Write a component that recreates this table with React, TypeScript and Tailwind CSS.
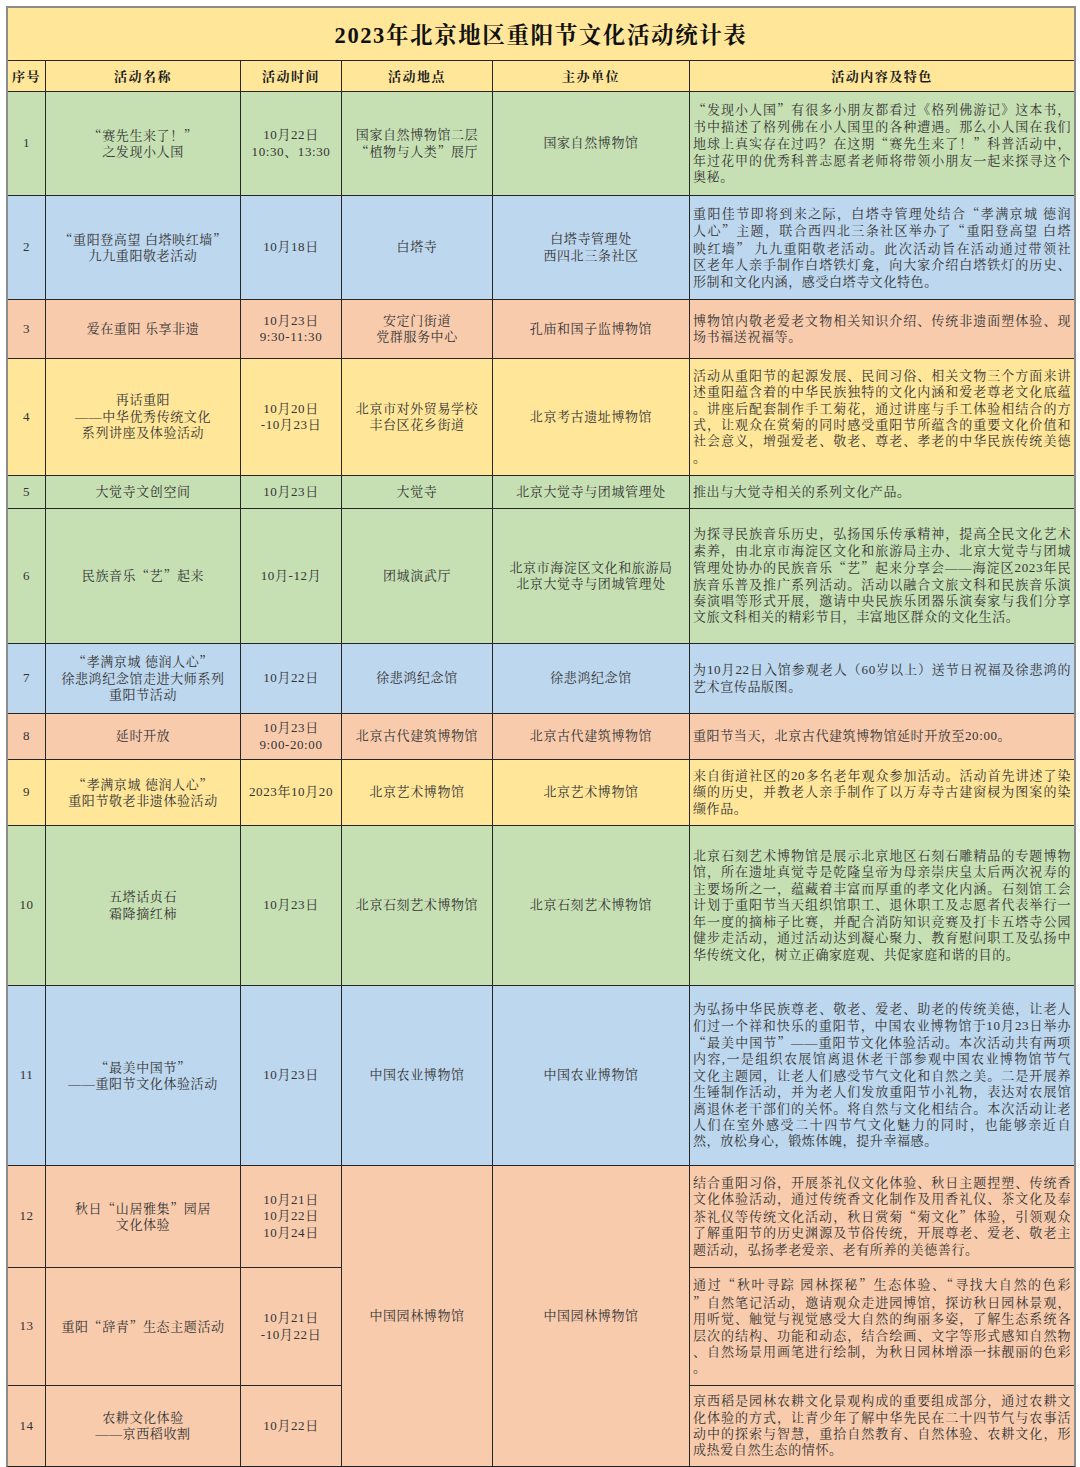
import React from "react";

type Row = {
  no: string;
  name: string[];
  time: string[];
  place?: string[];
  org?: string[];
  content: string[];
  bg: string;
};

const GREEN = "bg-[#c6e0b4]";
const BLUE = "bg-[#bdd7ee]";
const ORANGE = "bg-[#f8cbad]";
const YELLOW = "bg-[#ffe699]";

const rows: Row[] = [
  {
    no: "1",
    name: ["“赛先生来了！”", "之发现小人国"],
    time: ["10月22日", "10:30、13:30"],
    place: ["国家自然博物馆二层", "“植物与人类”展厅"],
    org: ["国家自然博物馆"],
    content: [
      "“发现小人国”有很多小朋友都看过《格列佛游记》这本书，",
      "书中描述了格列佛在小人国里的各种遭遇。那么小人国在我们",
      "地球上真实存在过吗？在这期“赛先生来了！”科普活动中，",
      "年过花甲的优秀科普志愿者老师将带领小朋友一起来探寻这个",
      "奥秘。",
    ],
    bg: GREEN,
  },
  {
    no: "2",
    name: ["“重阳登高望 白塔映红墙”", "九九重阳敬老活动"],
    time: ["10月18日"],
    place: ["白塔寺"],
    org: ["白塔寺管理处", "西四北三条社区"],
    content: [
      "重阳佳节即将到来之际，白塔寺管理处结合“孝满京城 德润",
      "人心”主题，联合西四北三条社区举办了“重阳登高望 白塔",
      "映红墙” 九九重阳敬老活动。此次活动旨在活动通过带领社",
      "区老年人亲手制作白塔铁灯龛，向大家介绍白塔铁灯的历史、",
      "形制和文化内涵，感受白塔寺文化特色。",
    ],
    bg: BLUE,
  },
  {
    no: "3",
    name: ["爱在重阳 乐享非遗"],
    time: ["10月23日", "9:30-11:30"],
    place: ["安定门街道", "党群服务中心"],
    org: ["孔庙和国子监博物馆"],
    content: [
      "博物馆内敬老爱老文物相关知识介绍、传统非遗面塑体验、现",
      "场书福送祝福等。",
    ],
    bg: ORANGE,
  },
  {
    no: "4",
    name: ["再话重阳", "——中华优秀传统文化", "系列讲座及体验活动"],
    time: ["10月20日", "-10月23日"],
    place: ["北京市对外贸易学校", "丰台区花乡街道"],
    org: ["北京考古遗址博物馆"],
    content: [
      "活动从重阳节的起源发展、民间习俗、相关文物三个方面来讲",
      "述重阳蕴含着的中华民族独特的文化内涵和爱老尊老文化底蕴",
      "。讲座后配套制作手工菊花，通过讲座与手工体验相结合的方",
      "式，让观众在赏菊的同时感受重阳节所蕴含的重要文化价值和",
      "社会意义，增强爱老、敬老、尊老、孝老的中华民族传统美德",
      "。",
    ],
    bg: YELLOW,
  },
  {
    no: "5",
    name: ["大觉寺文创空间"],
    time: ["10月23日"],
    place: ["大觉寺"],
    org: ["北京大觉寺与团城管理处"],
    content: ["推出与大觉寺相关的系列文化产品。"],
    bg: GREEN,
  },
  {
    no: "6",
    name: ["民族音乐“艺”起来"],
    time: ["10月-12月"],
    place: ["团城演武厅"],
    org: ["北京市海淀区文化和旅游局", "北京大觉寺与团城管理处"],
    content: [
      "为探寻民族音乐历史，弘扬国乐传承精神，提高全民文化艺术",
      "素养，由北京市海淀区文化和旅游局主办、北京大觉寺与团城",
      "管理处协办的民族音乐“艺”起来分享会——海淀区2023年民",
      "族音乐普及推广系列活动。活动以融合文旅文科和民族音乐演",
      "奏演唱等形式开展，邀请中央民族乐团器乐演奏家与我们分享",
      "文旅文科相关的精彩节目，丰富地区群众的文化生活。",
    ],
    bg: GREEN,
  },
  {
    no: "7",
    name: ["“孝满京城 德润人心”", "徐悲鸿纪念馆走进大师系列", "重阳节活动"],
    time: ["10月22日"],
    place: ["徐悲鸿纪念馆"],
    org: ["徐悲鸿纪念馆"],
    content: [
      "为10月22日入馆参观老人（60岁以上）送节日祝福及徐悲鸿的",
      "艺术宣传品版图。",
    ],
    bg: BLUE,
  },
  {
    no: "8",
    name: ["延时开放"],
    time: ["10月23日", "9:00-20:00"],
    place: ["北京古代建筑博物馆"],
    org: ["北京古代建筑博物馆"],
    content: ["重阳节当天，北京古代建筑博物馆延时开放至20:00。"],
    bg: ORANGE,
  },
  {
    no: "9",
    name: ["“孝满京城 德润人心”", "重阳节敬老非遗体验活动"],
    time: ["2023年10月20"],
    place: ["北京艺术博物馆"],
    org: ["北京艺术博物馆"],
    content: [
      "来自街道社区的20多名老年观众参加活动。活动首先讲述了染",
      "缬的历史，并教老人亲手制作了以万寿寺古建窗棂为图案的染",
      "缬作品。",
    ],
    bg: YELLOW,
  },
  {
    no: "10",
    name: ["五塔话贞石", "霜降摘红柿"],
    time: ["10月23日"],
    place: ["北京石刻艺术博物馆"],
    org: ["北京石刻艺术博物馆"],
    content: [
      "北京石刻艺术博物馆是展示北京地区石刻石雕精品的专题博物",
      "馆，所在遗址真觉寺是乾隆皇帝为母亲崇庆皇太后两次祝寿的",
      "主要场所之一，蕴藏着丰富而厚重的孝文化内涵。石刻馆工会",
      "计划于重阳节当天组织馆职工、退休职工及志愿者代表举行一",
      "年一度的摘柿子比赛，并配合消防知识竞赛及打卡五塔寺公园",
      "健步走活动，通过活动达到凝心聚力、教育慰问职工及弘扬中",
      "华传统文化，树立正确家庭观、共促家庭和谐的目的。",
    ],
    bg: GREEN,
  },
  {
    no: "11",
    name: ["“最美中国节”", "——重阳节文化体验活动"],
    time: ["10月23日"],
    place: ["中国农业博物馆"],
    org: ["中国农业博物馆"],
    content: [
      "为弘扬中华民族尊老、敬老、爱老、助老的传统美德，让老人",
      "们过一个祥和快乐的重阳节，中国农业博物馆于10月23日举办",
      "“最美中国节”——重阳节文化体验活动。本次活动共有两项",
      "内容,一是组织农展馆离退休老干部参观中国农业博物馆节气",
      "文化主题园，让老人们感受节气文化和自然之美。二是开展养",
      "生锤制作活动，并为老人们发放重阳节小礼物，表达对农展馆",
      "离退休老干部们的关怀。将自然与文化相结合。本次活动让老",
      "人们在室外感受二十四节气文化魅力的同时，也能够亲近自",
      "然，放松身心，锻炼体魄，提升幸福感。",
    ],
    bg: BLUE,
  },
  {
    no: "12",
    name: ["秋日“山居雅集”园居", "文化体验"],
    time: ["10月21日", "10月22日", "10月24日"],
    place: ["中国园林博物馆"],
    org: ["中国园林博物馆"],
    content: [
      "结合重阳习俗，开展茶礼仪文化体验、秋日主题捏塑、传统香",
      "文化体验活动，通过传统香文化制作及用香礼仪、茶文化及奉",
      "茶礼仪等传统文化活动，秋日赏菊“菊文化”体验，引领观众",
      "了解重阳节的历史渊源及节俗传统，开展尊老、爱老、敬老主",
      "题活动，弘扬孝老爱亲、老有所养的美德善行。",
    ],
    bg: ORANGE,
  },
  {
    no: "13",
    name: ["重阳“辞青”生态主题活动"],
    time: ["10月21日", "-10月22日"],
    content: [
      "通过“秋叶寻踪 园林探秘”生态体验、“寻找大自然的色彩",
      "”自然笔记活动，邀请观众走进园博馆，探访秋日园林景观，",
      "用听觉、触觉与视觉感受大自然的绚丽多姿，了解生态系统各",
      "层次的结构、功能和动态，结合绘画、文字等形式感知自然物",
      "、自然场景用画笔进行绘制，为秋日园林增添一抹靓丽的色彩",
      "。",
    ],
    bg: ORANGE,
  },
  {
    no: "14",
    name: ["农耕文化体验", "——京西稻收割"],
    time: ["10月22日"],
    content: [
      "京西稻是园林农耕文化景观构成的重要组成部分，通过农耕文",
      "化体验的方式，让青少年了解中华先民在二十四节气与农事活",
      "动中的探索与智慧，重拾自然教育、自然体验、农耕文化，形",
      "成热爱自然生态的情怀。",
    ],
    bg: ORANGE,
  },
];

function T({ text }: { text: string }) {
  const parts = text.split(/([“”])/);
  return (
    <>
      {parts.map((p, i) =>
        p === "“" || p === "”" ? (
          <span
            key={i}
            className="font-['Noto_Serif_CJK_SC','Noto_Sans_CJK_SC',serif] [font-feature-settings:'fwid']"
          >
            {p}
          </span>
        ) : (
          <React.Fragment key={i}>{p}</React.Fragment>
        )
      )}
    </>
  );
}

function Center({ lines, bg, extra = "" }: { lines: string[]; bg: string; extra?: string }) {
  return (
    <div className={`${bg} ${extra} flex flex-col items-center justify-center text-center px-[2px]`}>
      {lines.map((l, i) => (
        <div key={i} className="whitespace-pre">
          <T text={l} />
        </div>
      ))}
    </div>
  );
}

function Content({ lines, bg }: { lines: string[]; bg: string }) {
  return (
    <div className={`${bg} flex flex-col justify-center px-[3px]`}>
      {lines.map((l, i) => (
        <div
          key={i}
          className={
            i < lines.length - 1
              ? "text-justify [text-align-last:justify]"
              : "text-left"
          }
        >
          <T text={l} />
        </div>
      ))}
    </div>
  );
}

export default function App() {
  const headers = ["序号", "活动名称", "活动时间", "活动地点", "主办单位", "活动内容及特色"];
  return (
    <div className="w-[1080px] h-[1467px] bg-white pt-[6px] pl-[6px]">
      <div className="w-[1070px] border-x-2 border-t-2 border-[#8c8c8c] border-b border-b-[#222]">
        <div
          className="grid bg-[#262626] gap-px grid-cols-[37px_194px_100px_150px_196px_384px] grid-rows-[52px_30px_103px_103px_58px_116px_32px_134px_69px_45px_65px_159px_179px_101px_117px_80px] text-[13px] leading-[16.4px] tracking-[0.6px] text-[#333] font-['Liberation_Serif','Noto_Serif_CJK_SC','Noto_Sans_CJK_SC',serif]"
        >
          <div className="col-span-6 bg-[#ffe699] flex items-center justify-center text-[22.5px] font-bold tracking-[1.6px] text-[#111] pt-[4px]">
            2023年北京地区重阳节文化活动统计表
          </div>
          {headers.map((h) => (
            <div
              key={h}
              className="bg-[#ffe699] flex items-center justify-center font-bold text-[#1a1a1a] tracking-[1.5px] pt-[2px]"
            >
              {h}
            </div>
          ))}
          {rows.map((r) => (
            <React.Fragment key={r.no}>
              <Center lines={[r.no]} bg={r.bg} />
              <Center lines={r.name} bg={r.bg} />
              <Center lines={r.time} bg={r.bg} />
              {r.place && (
                <Center lines={r.place} bg={r.bg} extra={r.no === "12" ? "row-span-3" : ""} />
              )}
              {r.org && (
                <Center lines={r.org} bg={r.bg} extra={r.no === "12" ? "row-span-3" : ""} />
              )}
              <Content lines={r.content} bg={r.bg} />
            </React.Fragment>
          ))}
        </div>
      </div>
    </div>
  );
}
